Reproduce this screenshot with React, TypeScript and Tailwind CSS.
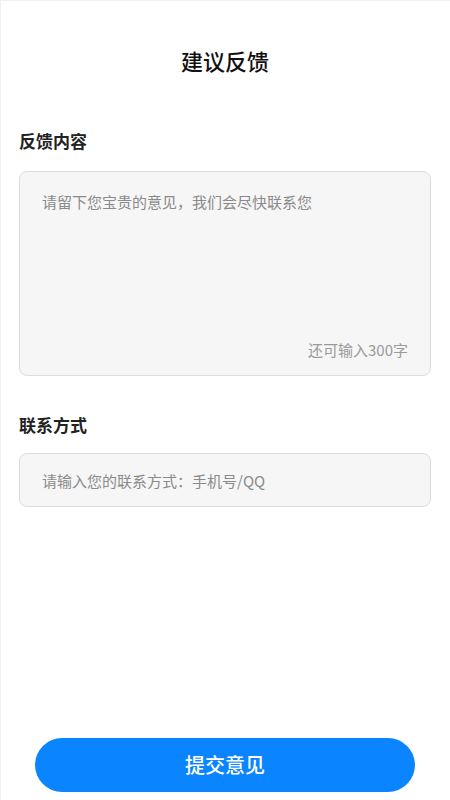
import { useState } from "react";

const MAX_LEN = 300;

export default function App() {
  const [content, setContent] = useState("");
  const [contact, setContact] = useState("");

  return (
    <div
      className="flex h-[800px] w-full flex-col border-l border-t border-[#f0f0f0] bg-white pl-[18px] pr-[19px]"
      style={{ fontFamily: '"Noto Sans CJK SC", "Noto Sans", sans-serif' }}
    >
      <h1 className="mt-[43px] text-center text-[22px] leading-[32px] font-medium text-[#111]">建议反馈</h1>

      <p className="mt-[53px] text-[17px] leading-[24px] font-bold text-[#222]">反馈内容</p>
      <div className="mt-[18px] flex h-[205px] flex-col rounded-lg border border-[#dcdcdc] bg-[#f6f6f6] px-[22px] pt-[19px] pb-[14px]">
        <textarea
          value={content}
          maxLength={MAX_LEN}
          onChange={(e) => setContent(e.target.value)}
          placeholder="请留下您宝贵的意见，我们会尽快联系您"
          className="flex-1 resize-none bg-transparent text-[15px] leading-[22px] text-[#333] outline-none placeholder:text-[#8a8a8a]"
        />
        <span className="self-end text-[15px] leading-[22px] text-[#9a9a9a]">还可输入{MAX_LEN - content.length}字</span>
      </div>

      <p className="mt-[37px] text-[17px] leading-[24px] font-bold text-[#222]">联系方式</p>
      <input
        value={contact}
        onChange={(e) => setContact(e.target.value)}
        placeholder="请输入您的联系方式：手机号/QQ"
        className="mt-[16px] h-[54px] rounded-lg border border-[#dcdcdc] bg-[#f6f6f6] px-[22px] text-[15px] text-[#333] outline-none placeholder:text-[#8a8a8a]"
      />

      <button className="mt-auto mb-[8px] ml-[16px] mr-[16px] h-[54px] rounded-full bg-[#0a84ff] text-[20px] font-medium text-white">
        提交意见
      </button>
    </div>
  );
}
